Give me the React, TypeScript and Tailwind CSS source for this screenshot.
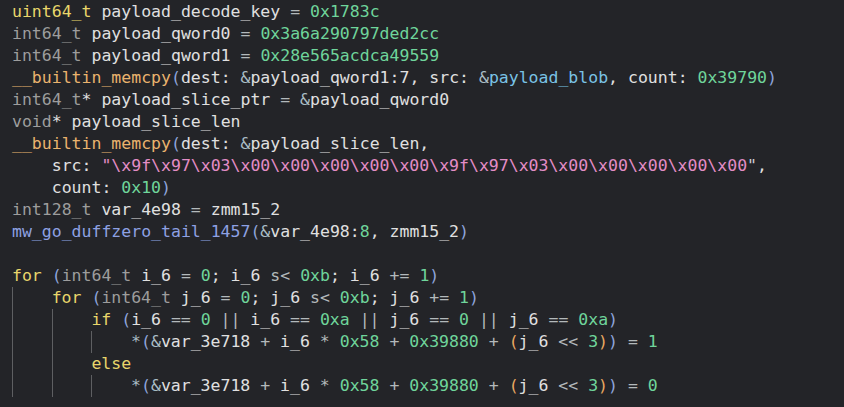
import React from "react";

type Tok = [string, string];

const kw = "text-[#e9d66b]";
const ty = "text-[#9d9d9d]";
const id = "text-[#e0e0e0]";
const num = "text-[#6fd59b]";
const fn = "text-[#eab36e]";
const p0 = "text-[#8fa4dc]";
const p1 = "text-[#e9a962]";
const op = "text-[#b3b9bb]";
const amp = "text-[#a9bcc5]";
const data = "text-[#7ac3e6]";
const str = "text-[#e38dc6]";
const imp = "text-[#8ea1e3]";

const hex = "\\x9f\\x97\\x03\\x00\\x00\\x00\\x00\\x00\\x9f\\x97\\x03\\x00\\x00\\x00\\x00\\x00";

// indent = number of 40px levels, guides = levels that draw a guide line
const lines: { indent: number; guides: number[]; toks: Tok[] }[] = [
  { indent: 0, guides: [], toks: [["uint64_t", kw], [" payload_decode_key ", id], ["=", op], [" ", id], ["0x1783c", num]] },
  { indent: 0, guides: [], toks: [["int64_t", ty], [" payload_qword0 ", id], ["=", op], [" ", id], ["0x3a6a290797ded2cc", num]] },
  { indent: 0, guides: [], toks: [["int64_t", ty], [" payload_qword1 ", id], ["=", op], [" ", id], ["0x28e565acdca49559", num]] },
  {
    indent: 0,
    guides: [],
    toks: [
      ["__builtin_memcpy", fn], ["(", p0], ["dest: ", id], ["&", amp], ["payload_qword1:7", id], [", src: ", id],
      ["&", amp], ["payload_blob", data], [", count: ", id], ["0x39790", num], [")", p0],
    ],
  },
  { indent: 0, guides: [], toks: [["int64_t", ty], ["* payload_slice_ptr ", id], ["=", op], [" ", id], ["&", amp], ["payload_qword0", id]] },
  { indent: 0, guides: [], toks: [["void", ty], ["* payload_slice_len", id]] },
  { indent: 0, guides: [], toks: [["__builtin_memcpy", fn], ["(", p0], ["dest: ", id], ["&", amp], ["payload_slice_len,", id]] },
  { indent: 0, guides: [], toks: [["    src: ", id], ["\"" + hex, str], ["\"", "text-[#c9cbd6]"], [",", id]] },
  { indent: 0, guides: [], toks: [["    count: ", id], ["0x10", num], [")", p0]] },
  { indent: 0, guides: [], toks: [["int128_t", ty], [" var_4e98 ", id], ["=", op], [" zmm15_2", id]] },
  {
    indent: 0,
    guides: [],
    toks: [["mw_go_duffzero_tail_1457", imp], ["(", p0], ["&", amp], ["var_4e98:", id], ["8", num], [", zmm15_2", id], [")", p0]],
  },
  { indent: 0, guides: [], toks: [[" ", id]] },
  {
    indent: 0,
    guides: [],
    toks: [
      ["for", kw], [" ", id], ["(", p0], ["int64_t", ty], [" i_6 ", id], ["=", op], [" ", id], ["0", num], ["; i_6 ", id],
      ["s<", op], [" ", id], ["0xb", num], ["; i_6 ", id], ["+=", op], [" ", id], ["1", num], [")", p0],
    ],
  },
  {
    indent: 1,
    guides: [0],
    toks: [
      ["for", kw], [" ", id], ["(", p0], ["int64_t", ty], [" j_6 ", id], ["=", op], [" ", id], ["0", num], ["; j_6 ", id],
      ["s<", op], [" ", id], ["0xb", num], ["; j_6 ", id], ["+=", op], [" ", id], ["1", num], [")", p0],
    ],
  },
  {
    indent: 2,
    guides: [0, 1],
    toks: [
      ["if", kw], [" ", id], ["(", p0], ["i_6 ", id], ["==", op], [" ", id], ["0", num], [" ", id], ["||", op], [" i_6 ", id],
      ["==", op], [" ", id], ["0xa", num], [" ", id], ["||", op], [" j_6 ", id], ["==", op], [" ", id], ["0", num], [" ", id],
      ["||", op], [" j_6 ", id], ["==", op], [" ", id], ["0xa", num], [")", p0],
    ],
  },
  {
    indent: 3,
    guides: [0, 1, 2],
    toks: [
      ["*", amp], ["(", p0], ["&", amp], ["var_3e718 ", id], ["+", op], [" i_6 ", id], ["*", op], [" ", id], ["0x58", num],
      [" ", id], ["+", op], [" ", id], ["0x39880", num], [" ", id], ["+", op], [" ", id], ["(", p1], ["j_6 ", id], ["<<", op],
      [" ", id], ["3", num], [")", p1], [")", p0], [" ", id], ["=", op], [" ", id], ["1", num],
    ],
  },
  { indent: 2, guides: [0, 1], toks: [["else", kw]] },
  {
    indent: 3,
    guides: [0, 1, 2],
    toks: [
      ["*", amp], ["(", p0], ["&", amp], ["var_3e718 ", id], ["+", op], [" i_6 ", id], ["*", op], [" ", id], ["0x58", num],
      [" ", id], ["+", op], [" ", id], ["0x39880", num], [" ", id], ["+", op], [" ", id], ["(", p1], ["j_6 ", id], ["<<", op],
      [" ", id], ["3", num], [")", p1], [")", p0], [" ", id], ["=", op], [" ", id], ["0", num],
    ],
  },
];

export default function App() {
  return (
    <div className="w-[844px] h-[407px] overflow-hidden bg-[#232428] pt-[1px] pl-[12px] font-['DejaVu_Sans_Mono',monospace] text-[16.5px] leading-[22px]">
      {lines.map((line, i) => (
        <div key={i} className="flex h-[22px] whitespace-pre">
          {Array.from({ length: line.indent }).map((_, lvl) => (
            <span
              key={lvl}
              className={
                line.guides.includes(lvl)
                  ? "w-[39.7px] shrink-0 border-l border-[#5e5f62]"
                  : "w-[39.7px] shrink-0"
              }
            />
          ))}
          <span>
            {line.toks.map(([t, c], j) => (
              <span key={j} className={c}>
                {t}
              </span>
            ))}
          </span>
        </div>
      ))}
    </div>
  );
}
